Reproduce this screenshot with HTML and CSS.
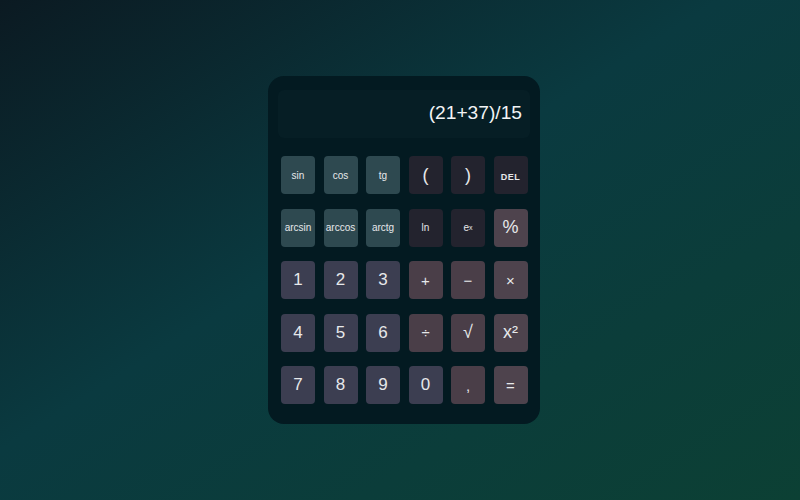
FILE: index.html
```html
<!DOCTYPE html>
<html lang="en">
<head>
<meta charset="utf-8">
<title>Calculator</title>
<link rel="stylesheet" href="styles.css">
</head>
<body>
<main class="stage">
  <div class="calc">
    <div class="display"><span class="expr">(21+37)/15</span></div>
    <div class="keys">
      <button class="key fn">sin</button>
      <button class="key fn">cos</button>
      <button class="key fn">tg</button>
      <button class="key dark big">(</button>
      <button class="key dark big">)</button>
      <button class="key dark del">DEL</button>

      <button class="key fn">arcsin</button>
      <button class="key fn">arccos</button>
      <button class="key fn">arctg</button>
      <button class="key dark">ln</button>
      <button class="key dark">e<sup>x</sup></button>
      <button class="key op2 big">%</button>

      <button class="key num">1</button>
      <button class="key num">2</button>
      <button class="key num">3</button>
      <button class="key op">+</button>
      <button class="key op">−</button>
      <button class="key op2">×</button>

      <button class="key num">4</button>
      <button class="key num">5</button>
      <button class="key num">6</button>
      <button class="key op">÷</button>
      <button class="key op big">√</button>
      <button class="key op2 big">x²</button>

      <button class="key num">7</button>
      <button class="key num">8</button>
      <button class="key num">9</button>
      <button class="key num">0</button>
      <button class="key op">,</button>
      <button class="key op2">=</button>
    </div>
  </div>
</main>
</body>
</html>
```
FILE: styles.css
```css
* { box-sizing: border-box; }
html, body { margin: 0; height: 100%; }
body {
  background: linear-gradient(to bottom right, #0b1a22 0%, #0a3a40 45%, #0c4034 100%);
  font-family: "Liberation Sans", Arial, sans-serif;
}
.stage {
  height: 500px;
  display: flex;
  justify-content: center;
  padding: 76px 0 0 8px;
}
.calc {
  width: 272px;
  height: 348px;
  background: #031a21;
  border-radius: 16px;
  padding: 14px 10px 0 10px;
}
.display {
  height: 48px;
  background: #061e25;
  border-radius: 6px;
  display: flex;
  align-items: center;
  justify-content: flex-end;
  padding: 0 8px 2px 0;
}
.expr {
  color: #f2f4f5;
  font-size: 19.2px;
}
.keys {
  margin: 18px 3px 0 3px;
  display: grid;
  grid-template-columns: repeat(6, 34px);
  grid-auto-rows: 38px;
  column-gap: 8.5px;
  row-gap: 14.6px;
}
.key {
  border: none;
  border-radius: 4px;
  color: #e6e8ea;
  font-family: "Liberation Sans", Arial, sans-serif;
  font-size: 10px;
  padding: 0;
  display: flex;
  align-items: center;
  justify-content: center;
}
.key.fn { background: #2e4950; }
.key.dark { background: #23232e; }
.key.num { background: #3c3e51; font-size: 17px; }
.key.op { background: #4a3e48; font-size: 15px; }
.key.op2 { background: #4e434d; font-size: 15px; }
.key.big { font-size: 18px; }
.key.del { font-size: 9px; font-weight: bold; letter-spacing: 0.5px; padding-top: 4px; }
.key sup { font-size: 7px; vertical-align: 3px; }
```
